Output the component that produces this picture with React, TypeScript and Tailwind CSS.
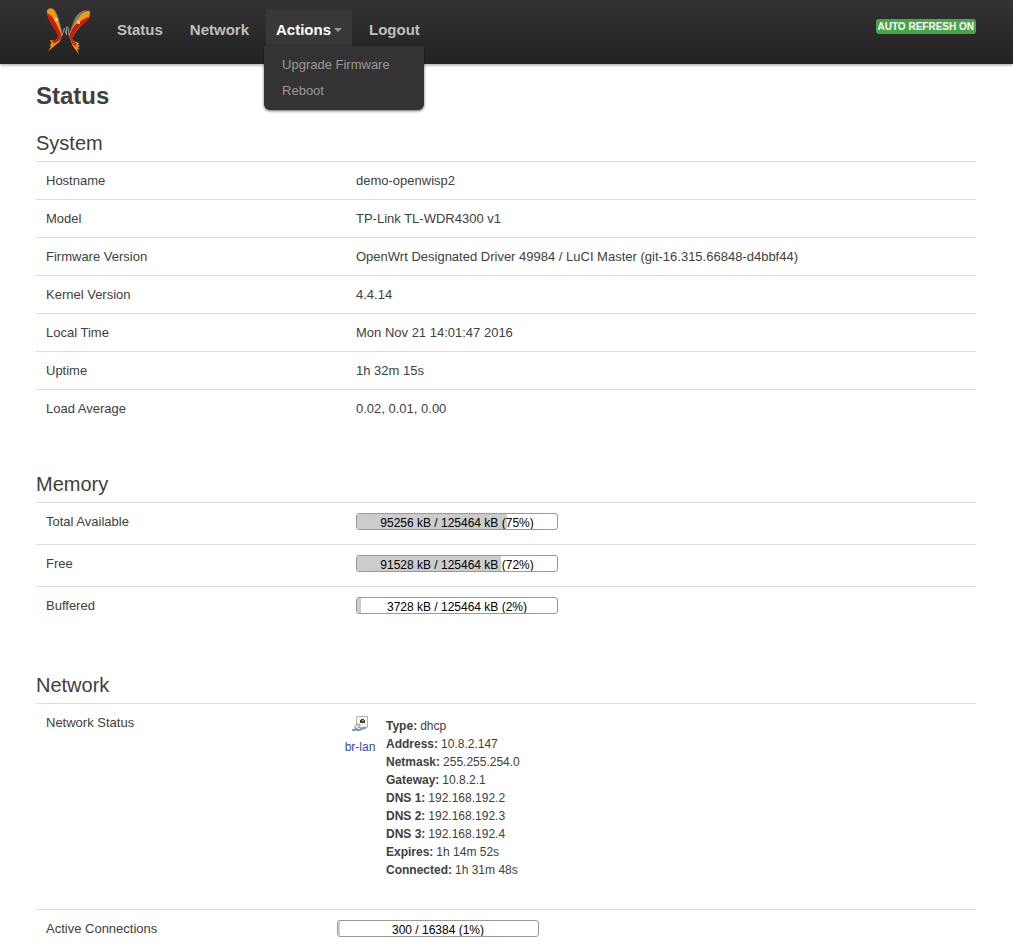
import { ReactNode } from "react";

type Field = { label: string; value: string };

const system: Field[] = [
  { label: "Hostname", value: "demo-openwisp2" },
  { label: "Model", value: "TP-Link TL-WDR4300 v1" },
  {
    label: "Firmware Version",
    value: "OpenWrt Designated Driver 49984 / LuCI Master (git-16.315.66848-d4bbf44)",
  },
  { label: "Kernel Version", value: "4.4.14" },
  { label: "Local Time", value: "Mon Nov 21 14:01:47 2016" },
  { label: "Uptime", value: "1h 32m 15s" },
  { label: "Load Average", value: "0.02, 0.01, 0.00" },
];

const memory = [
  { label: "Total Available", text: "95256 kB / 125464 kB (75%)", percent: 75 },
  { label: "Free", text: "91528 kB / 125464 kB (72%)", percent: 72 },
  { label: "Buffered", text: "3728 kB / 125464 kB (2%)", percent: 2 },
];

const lan: Field[] = [
  { label: "Type", value: "dhcp" },
  { label: "Address", value: "10.8.2.147" },
  { label: "Netmask", value: "255.255.254.0" },
  { label: "Gateway", value: "10.8.2.1" },
  { label: "DNS 1", value: "192.168.192.2" },
  { label: "DNS 2", value: "192.168.192.3" },
  { label: "DNS 3", value: "192.168.192.4" },
  { label: "Expires", value: "1h 14m 52s" },
  { label: "Connected", value: "1h 31m 48s" },
];

function Logo() {
  return (
    <svg viewBox="0 0 144 144" className="h-12 w-12" aria-hidden="true">
      <path d="M24 7C34 10 42 28 46 44L57 86L52 92L40 55Z" fill="#777" />
      <path d="M128 12C108 14 96 28 90 42L74 86L79 92L96 55Z" fill="#777" />
      <path d="M9 14C12 4 25 4 31 14C37 24 40 36 44 50L54 88L46 98L38 78C28 60 8 36 9 14Z" fill="#f59a08" />
      <path d="M9 22C14 24 22 28 28 38C38 54 46 72 53 88L47 99L40 84C30 64 12 46 9 22Z" fill="#cb1a16" />
      <path d="M137 15C142 34 126 46 108 62C96 74 90 88 82 100L75 90C83 68 92 48 108 30C118 18 132 12 137 15Z" fill="#f59a08" />
      <path d="M137 34C130 50 114 54 103 66C94 76 88 90 82 100L75 90C82 74 88 58 102 50C114 45 124 34 137 34Z" fill="#cb1a16" />
      <path d="M48 84L54 90L46 108L34 117L13 136L22 119L16 118L23 112L17 103L36 102Z" fill="#f59a08" />
      <path d="M48 84L54 90L44 105L26 114L28 109L20 105L38 100Z" fill="#cb1a16" />
      <path d="M75 88L82 96L90 106L107 112L101 115L108 121L101 122L107 131L99 128L105 146L85 118Z" fill="#f59a08" />
      <path d="M75 88L81 94L89 107L99 114L95 117L100 125L86 115Z" fill="#cb1a16" />
      <path d="M53 90L61 67L68 87L68 62L72 64L76 90" fill="none" stroke="#999" strokeWidth="3" />
      <circle cx="37" cy="41" r="4" fill="#ffeeb0" />
      <circle cx="104" cy="50" r="4" fill="#ffeeb0" />
    </svg>
  );
}

function PortIcon() {
  return (
    <svg viewBox="0 0 16 16" className="h-4 w-4" aria-hidden="true">
      <path d="M4.5.5h11v11h-11z" fill="#f3f3ef" stroke="#b5b5b5" />
      <path d="M8 4h1V3h3v1h1v3H8z" fill="#444" />
      <path d="M10 4h2v1h-2z" fill="#a9b33c" />
      <path d="M0 14.5c3-2 5 0 7-.5s3-2 7-2" fill="none" stroke="#7595cc" strokeWidth="2" />
      <path d="m2.5 11 2-2.5 3-.5.5 2-2.5 2.5H3Z" fill="#ddd" stroke="#999" />
    </svg>
  );
}

function NavLink({ children }: { children: ReactNode }) {
  return (
    <a href="#" className="px-2.5 pt-0.5 text-[#bfbfbf]">
      {children}
    </a>
  );
}

function ProgressBar({ text, percent }: { text: string; percent: number }) {
  return (
    <div className="relative h-[17px] w-[202px] overflow-hidden rounded-[3px] border border-[#999] text-center text-xs leading-[18px] text-black">
      <div className="absolute inset-y-0 left-0 bg-[#ccc]" style={{ width: `${percent}%` }} />
      <span className="relative">{text}</span>
    </div>
  );
}

function Section({ title, children }: { title: string; children: ReactNode }) {
  return (
    <section className="mb-[39px]">
      <h3 className="text-xl leading-9">{title}</h3>
      <table className="w-full text-left text-[13px] leading-[17px]">
        <tbody>{children}</tbody>
      </table>
    </section>
  );
}

function Row({ label, narrow, children }: { label: string; narrow?: boolean; children: ReactNode }) {
  return (
    <tr className="border-t border-[#ddd] align-top">
      <th scope="row" className={`${narrow ? "w-[291px]" : "w-[310px]"} p-2.5 font-normal`}>
        {label}
      </th>
      <td className="p-2.5">{children}</td>
    </tr>
  );
}

export default function App() {
  return (
    <div className="min-h-screen bg-white font-['Liberation_Sans',Arial,sans-serif] text-[#404040]">
      <header className="bg-linear-to-b from-[#333] to-[#222] shadow-[0_1px_3px_rgba(0,0,0,0.4)]">
        <div className="mx-auto flex h-16 max-w-[1013px] items-start pr-[37px] pl-11">
          <a href="#" aria-label="Home" className="mr-[15px] pt-1.5">
            <Logo />
          </a>
          <nav className="mt-2.5 flex gap-[7px] text-[15px] leading-9 font-bold">
            <NavLink>Status</NavLink>
            <NavLink>Network</NavLink>
            <div className="relative">
              <button
                type="button"
                aria-expanded="true"
                className="flex h-9 items-center gap-[3px] bg-[#383838] px-2.5 pt-1 text-white"
              >
                Actions
                <span className="border-x-4 border-t-4 border-x-transparent border-t-[#999]" />
              </button>
              <ul className="absolute top-9 -left-0.5 w-40 rounded-b-md bg-[#333] py-1.5 text-[13px] leading-[26px] font-normal text-[#999] shadow-[0_1px_3px_rgba(0,0,0,0.6)]">
                <li>
                  <a href="#" className="block px-[18px]">
                    Upgrade Firmware
                  </a>
                </li>
                <li>
                  <a href="#" className="block px-[18px]">
                    Reboot
                  </a>
                </li>
              </ul>
            </div>
            <NavLink>Logout</NavLink>
          </nav>
          <button
            type="button"
            className="mt-[19px] ml-auto rounded-[3px] bg-[#46a546] px-0.5 text-[10px] leading-[15px] font-bold text-white"
          >
            AUTO REFRESH ON
          </button>
        </div>
      </header>

      <main className="mx-auto max-w-[1013px] pt-3.5 pr-[37px] pl-9">
        <h2 className="mb-[11px] text-2xl leading-9 font-bold">Status</h2>

        <Section title="System">
          {system.map((f) => (
            <Row key={f.label} label={f.label}>
              {f.value}
            </Row>
          ))}
        </Section>

        <Section title="Memory">
          {memory.map((m) => (
            <Row key={m.label} label={m.label}>
              <div className="pb-1">
                <ProgressBar text={m.text} percent={m.percent} />
              </div>
            </Row>
          ))}
        </Section>

        <Section title="Network">
          <Row label="Network Status" narrow>
            <div className="flex gap-[3px] pb-5 text-xs">
              <div className="flex w-[46px] flex-col items-center pt-0.5">
                <PortIcon />
                <a href="#" className="mt-1.5 leading-[18px] text-[#3344cc]">
                  br-lan
                </a>
              </div>
              <dl className="pt-[3px] leading-[18px]">
                {lan.map((f) => (
                  <div key={f.label} className="flex gap-[3px]">
                    <dt className="font-bold">{f.label}:</dt>
                    <dd>{f.value}</dd>
                  </div>
                ))}
              </dl>
            </div>
          </Row>
          <Row label="Active Connections" narrow>
            <ProgressBar text="300 / 16384 (1%)" percent={1} />
          </Row>
        </Section>
      </main>
    </div>
  );
}
